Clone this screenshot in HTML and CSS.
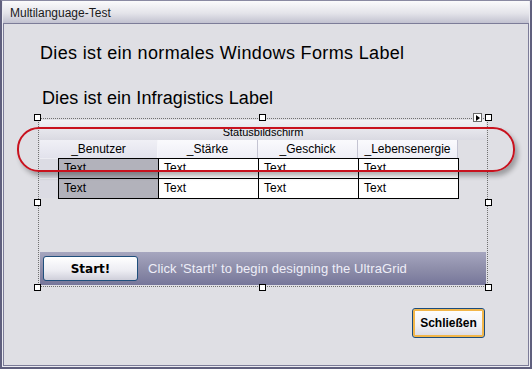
FILE: index.html
```html
<!DOCTYPE html>
<html lang="de">
<head>
    <meta charset="UTF-8">
    <meta name="viewport" content="width=device-width, initial-scale=1.0">
    <title>Multilanguage-Test</title>
    <link rel="stylesheet" href="styles.css">
</head>
<body>
    <div class="window">
        <div class="titlebar">Multilanguage-Test</div>
        <div class="client">
            <div class="label1">Dies ist ein normales Windows Forms Label</div>
            <div class="label2">Dies ist ein Infragistics Label</div>

            <div class="host">
                <div class="grid">
                    <div class="caption">Statusbildschirm</div>
                    <div class="header">
                        <div class="hcell first">_Benutzer</div>
                        <div class="hcell">_Stärke</div>
                        <div class="hcell">_Geschick</div>
                        <div class="hcell">_Lebensenergie</div>
                    </div>
                    <div class="row">
                        <div class="sel"></div>
                        <div class="cell active">Text</div>
                        <div class="cell">Text</div>
                        <div class="cell">Text</div>
                        <div class="cell last">Text</div>
                    </div>
                    <div class="row lastrow">
                        <div class="sel"></div>
                        <div class="cell active">Text</div>
                        <div class="cell">Text</div>
                        <div class="cell">Text</div>
                        <div class="cell last">Text</div>
                    </div>
                    <div class="empty"></div>
                    <div class="bar">
                        <button class="start">Start!</button>
                        <span class="hint">Click 'Start!' to begin designing the UltraGrid</span>
                    </div>
                </div>
                <span class="handle h-tl"></span>
                <span class="handle h-tc"></span>
                <span class="handle h-tr"></span>
                <span class="handle h-ml"></span>
                <span class="handle h-mr"></span>
                <span class="handle h-bl"></span>
                <span class="handle h-bc"></span>
                <span class="handle h-br"></span>
                <span class="smarttag"></span>
            </div>

            <div class="actions">
                <button class="close">Schließen</button>
            </div>
        </div>
        <div class="mark"></div>
    </div>
</body>
</html>
```

FILE: styles.css
```css
*{
    margin: 0;
    padding: 0;
    box-sizing: border-box;
}
body{
    width: 532px;
    height: 369px;
    overflow: hidden;
    background: #dfdfe4;
    font-family: "Liberation Sans", Arial, sans-serif;
}
.window{
    position: relative;
    width: 532px;
    height: 369px;
    border: 2px solid #60607e;
    border-top: 1px solid #8a8aa2;
    background: #ececf2;
    padding: 0 1px 1px 1px;
    display: flex;
    flex-direction: column;
}
.titlebar{
    height: 22px;
    padding: 5px 0 0 7px;
    font-size: 12px;
    color: #1a1a1a;
    background: linear-gradient(#fbfbfc, #e4e4ea 55%, #c2c2d0);
}
.client{
    flex: 1;
    border: 1px solid #7c7c98;
    background: #dfdfe4;
    display: flex;
    flex-direction: column;
}
.label1{
    margin: 19px 0 0 36px;
    font-size: 18px;
    line-height: 21px;
    letter-spacing: 0.35px;
    color: #000;
}
.label2{
    margin: 24px 0 0 38px;
    font-size: 18px;
    line-height: 21px;
    letter-spacing: 0.1px;
    color: #000;
}
.host{
    position: relative;
    margin: 9px 0 0 34px;
    width: 450px;
    height: 169px;
    border: 1px dotted #707070;
    padding: 1px;
}
.grid{
    height: 100%;
    display: flex;
    flex-direction: column;
    font-size: 11px;
    color: #000;
}
.caption{
    height: 20px;
    text-align: center;
    line-height: 25px;
    background: linear-gradient(#f2f2f6, #dadae2);
}
.header{
    display: flex;
    height: 18px;
}
.hcell{
    width: 100px;
    text-align: center;
    line-height: 18px;
    font-size: 12px;
    background: linear-gradient(#fafafd, #eeeef6);
    border-right: 1px solid #c4c4d2;
}
.hcell.first{
    width: 118px;
    background: linear-gradient(#f0f0f6, #e2e2ec);
    border-right-color: #f6f6fa;
}
.row{
    display: flex;
    height: 20px;
}
.sel{
    width: 18px;
    background: #dcdce4;
    border-top: 1px solid #ececf2;
}
.cell{
    width: 100px;
    border-left: 1px solid #000;
    border-top: 1px solid #000;
    background: #fff;
    padding-left: 5px;
    line-height: 19px;
    font-size: 12px;
}
.cell.active{
    background: #b2b2bb;
}
.cell.last{
    width: 101px;
    border-right: 1px solid #000;
}
.lastrow .cell{
    height: 21px;
    border-bottom: 1px solid #000;
}
.empty{
    flex: 1;
}
.bar{
    height: 33px;
    display: flex;
    align-items: center;
    padding-left: 3px;
    background: linear-gradient(#a6a6bf, #8e8eaa 50%, #76769a);
}
.start{
    width: 95px;
    height: 25px;
    border: 1px solid #1f4f7c;
    border-radius: 3px;
    background: linear-gradient(#ffffff, #ececf2 60%, #cfcfda);
    font-family: "DejaVu Sans", Verdana, sans-serif;
    font-weight: bold;
    font-size: 12px;
    color: #000;
}
.hint{
    margin-left: 10px;
    font-size: 13px;
    color: #eeeef8;
    letter-spacing: 0.1px;
}
.handle{
    position: absolute;
    width: 7px;
    height: 7px;
    background: #fff;
    border: 1px solid #000;
}
.h-tl{ left: -5px; top: -5px; }
.h-tc{ left: calc(50% - 4px); top: -5px; }
.h-tr{ right: -5px; top: -5px; }
.h-ml{ left: -5px; top: calc(50% - 4px); }
.h-mr{ right: -5px; top: calc(50% - 4px); }
.h-bl{ left: -5px; bottom: -5px; }
.h-bc{ left: calc(50% - 4px); bottom: -5px; }
.h-br{ right: -5px; bottom: -5px; }
.smarttag{
    position: absolute;
    right: 5px;
    top: -6px;
    width: 9px;
    height: 9px;
    background: #fff;
    border: 1px solid #6a6a6a;
}
.smarttag::after{
    content: "";
    position: absolute;
    left: 2px;
    top: 1px;
    border-left: 4px solid #000;
    border-top: 3px solid transparent;
    border-bottom: 3px solid transparent;
}
.actions{
    display: flex;
    justify-content: flex-end;
    padding: 21px 43px 0 0;
}
.close{
    width: 73px;
    height: 30px;
    border: 1px solid #1c4c7c;
    border-radius: 3px;
    box-shadow: inset 0 0 0 2px #f2b64a;
    background: linear-gradient(#ffffff, #f0f0f4 60%, #d8d8e2);
    font-family: "Liberation Sans", Arial, sans-serif;
    font-weight: bold;
    font-size: 12px;
    color: #000;
}
.mark{
    position: absolute;
    left: 15px;
    top: 126px;
    width: 498px;
    height: 45px;
    border: 2.5px solid #c8121e;
    border-radius: 22px;
    box-shadow: 3px 4px 5px rgba(0, 0, 0, 0.3);
}
```
